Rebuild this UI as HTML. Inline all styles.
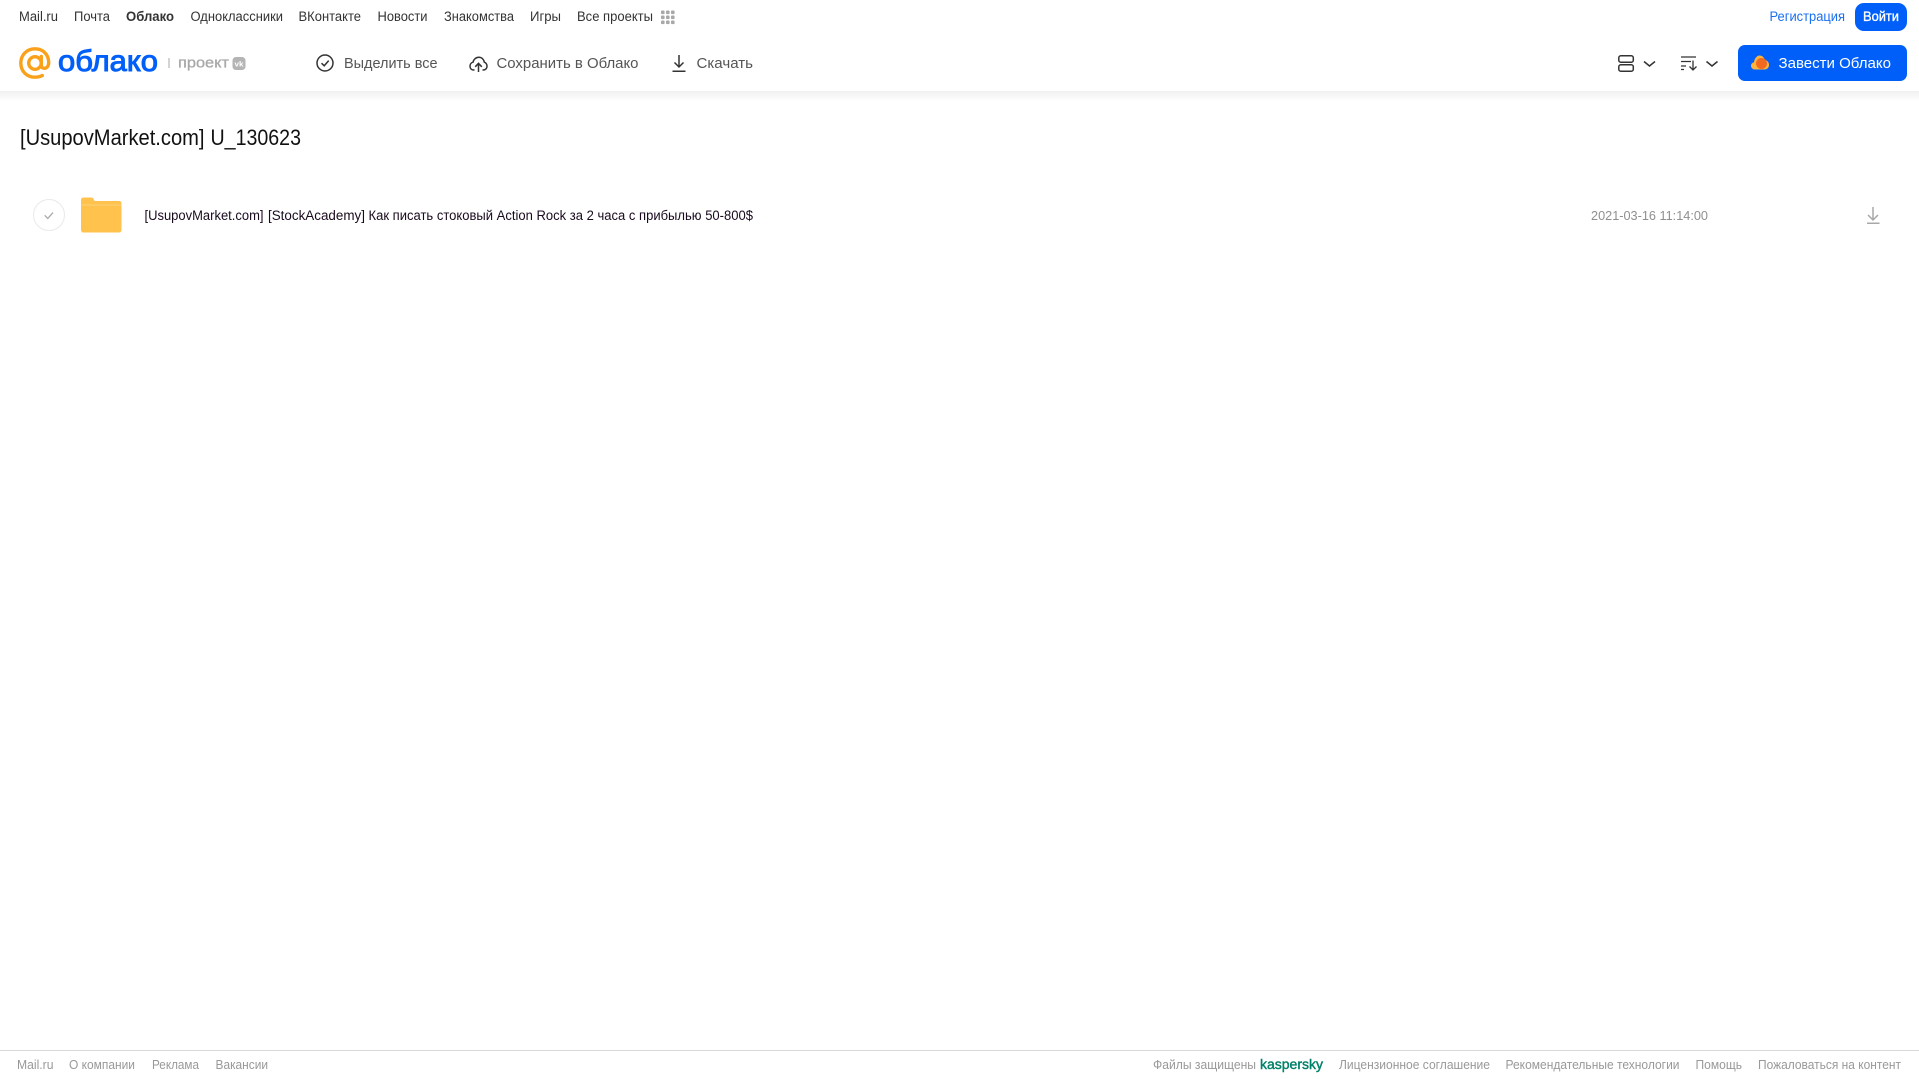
<!DOCTYPE html>
<html><head><meta charset="utf-8"><title>Облако</title>
<style>
html,body{margin:0;padding:0;background:#fff;overflow:hidden;width:1919px;height:1079px}
svg{display:block;position:absolute;left:0;top:0;filter:blur(.3px)}
text{font-family:"Liberation Sans",sans-serif;dominant-baseline:auto}
.n{font-size:13.5px;fill:#333}
.h{font-size:15px;fill:#555}
.f{font-size:12.5px;fill:#999}
</style></head><body>
<svg width="1919" height="1079" viewBox="0 0 1919 1079" xmlns="http://www.w3.org/2000/svg">
<defs><linearGradient id="sh" x1="0" y1="0" x2="0" y2="1"><stop offset="0" stop-color="#f0f0f0"/><stop offset="1" stop-color="#fff"/></linearGradient></defs>
<rect x="0" y="91" width="1919" height="10" fill="url(#sh)"/>

<!-- top nav -->
<g class="n">
<text class="n" x="19" y="21" textLength="39" lengthAdjust="spacingAndGlyphs">Mail.ru</text>
<text class="n" x="74" y="21" textLength="36" lengthAdjust="spacingAndGlyphs">Почта</text>
<text class="n" x="126" y="21" textLength="48" lengthAdjust="spacingAndGlyphs" font-weight="bold">Облако</text>
<text class="n" x="190.500" y="21" textLength="92.500" lengthAdjust="spacingAndGlyphs">Одноклассники</text>
<text class="n" x="298.500" y="21" textLength="62.500" lengthAdjust="spacingAndGlyphs">ВКонтакте</text>
<text class="n" x="377.500" y="21" textLength="50" lengthAdjust="spacingAndGlyphs">Новости</text>
<text class="n" x="444" y="21" textLength="70" lengthAdjust="spacingAndGlyphs">Знакомства</text>
<text class="n" x="530" y="21" textLength="31" lengthAdjust="spacingAndGlyphs">Игры</text>
<text class="n" x="577" y="21" textLength="76" lengthAdjust="spacingAndGlyphs">Все проекты</text>
</g>
<g fill="#a8a8a8">
<rect x="661" y="10.500" width="3.600" height="3.600" rx="1"/><rect x="666" y="10.500" width="3.600" height="3.600" rx="1"/><rect x="671" y="10.500" width="3.600" height="3.600" rx="1"/>
<rect x="661" y="15.500" width="3.600" height="3.600" rx="1"/><rect x="666" y="15.500" width="3.600" height="3.600" rx="1"/><rect x="671" y="15.500" width="3.600" height="3.600" rx="1"/>
<rect x="661" y="20.500" width="3.600" height="3.600" rx="1"/><rect x="666" y="20.500" width="3.600" height="3.600" rx="1"/><rect x="671" y="20.500" width="3.600" height="3.600" rx="1"/>
</g>
<text x="1769.500" y="21" font-size="13.500" fill="#1a6ff0" textLength="75.500" lengthAdjust="spacingAndGlyphs">Регистрация</text>
<rect x="1855" y="3" width="52" height="28" rx="9" fill="#005ff9"/>
<text x="1863" y="21" font-size="13.500" fill="#fff" stroke="#fff" stroke-width=".35" textLength="36" lengthAdjust="spacingAndGlyphs">Войти</text>

<!-- logo -->
<g fill="none" stroke="#f9a11b" stroke-width="3.400">
<circle cx="35" cy="63" r="6.300"/>
<path d="M41.300 56.500V65.500C41.300 69.500 48.700 69.800 48.700 62.500C48.700 54 42.500 48.800 35 48.800C26.800 48.800 20.800 55 20.800 63C20.800 71.500 27 77.200 35 77.200C37.800 77.200 40 76.700 42.300 75.500" stroke-linecap="round"/>
</g>
<text x="58" y="71" font-size="30" fill="#005ff9" stroke="#005ff9" stroke-width="1" textLength="100" lengthAdjust="spacingAndGlyphs">облако</text>
<rect x="168.500" y="58" width="1" height="10" fill="#aaa"/>
<text x="178" y="67.500" font-size="15" fill="#a8a8a8" stroke="#a8a8a8" stroke-width=".3" textLength="51" lengthAdjust="spacingAndGlyphs">проект</text>
<rect x="232.500" y="57" width="13" height="13" rx="3.500" fill="#b4b4b4"/>
<text x="234.500" y="66.500" font-size="7.500" font-weight="bold" fill="#fff" textLength="9" lengthAdjust="spacingAndGlyphs">vk</text>

<!-- toolbar -->
<circle cx="325" cy="63" r="8" fill="none" stroke="#333" stroke-width="1.500"/>
<path d="M321.500 63.200L324.200 65.800L328.700 60.600" fill="none" stroke="#333" stroke-width="1.500"/>
<text class="h" x="344" y="68" textLength="93.500" lengthAdjust="spacingAndGlyphs">Выделить все</text>
<path d="M474.500 70H473.800C471.300 70 470 68.200 470 66.200C470 64.200 471.300 62.600 473 62.200C473.500 59.400 476 57.200 478.800 57.200C481.600 57.200 483.700 59.200 484.300 62.200C486 62.800 487 64.200 487 66.200C487 68.200 485.600 70 483.300 70H482.500M478.500 72V63.500M475.200 66.800L478.500 63.300L481.800 66.800" fill="none" stroke="#333" stroke-width="1.500"/>
<text class="h" x="496.500" y="68" textLength="142" lengthAdjust="spacingAndGlyphs">Сохранить в Облако</text>
<path d="M679 55V67M674.500 62.500L679 67L683.500 62.500M672.500 71.300H685.500" fill="none" stroke="#333" stroke-width="1.500"/>
<text class="h" x="696.500" y="68" textLength="56.500" lengthAdjust="spacingAndGlyphs">Скачать</text>

<!-- right tools -->
<g fill="none" stroke="#333" stroke-width="1.500">
<rect x="1618.800" y="55.800" width="14.500" height="6.400" rx="2"/>
<rect x="1618.800" y="64.800" width="14.500" height="6.400" rx="2"/>
<path d="M1644 61.500L1649.500 66L1655 61.500"/>
<path d="M1681 57H1696M1681 61.500H1691M1681 66H1686M1681 69.500H1684" stroke-width="1.200"/>
<path d="M1693 60.500V69.500M1689.500 66.500L1693 70L1696.500 66.500" stroke-width="1.300"/>
<path d="M1706.500 61.500L1712 66L1717.500 61.500"/>
</g>
<rect x="1738" y="45" width="169" height="36" rx="7" fill="#005ff9"/>
<path d="M1755 69.500C1752.500 69.500 1751 67.800 1751 65.800C1751 64 1752.200 62.600 1754 62.200C1754.300 59.200 1756.600 55.500 1759.500 55.500C1762.300 55.500 1764 57.500 1764.800 59.800C1767.500 60.500 1769 62.600 1769 65C1769 67.600 1767 69.500 1764.500 69.500Z" fill="#fdb43b"/>
<circle cx="1761.500" cy="63.500" r="5.500" fill="#f26a1f"/>
<text x="1778.500" y="68" font-size="15" fill="#fff" textLength="112.500" lengthAdjust="spacingAndGlyphs">Завести Облако</text>

<!-- title -->
<text x="20" y="145" font-size="22" fill="#111" textLength="184.500" lengthAdjust="spacingAndGlyphs">[UsupovMarket.com]</text>
<text x="210.500" y="145" font-size="22" fill="#111" textLength="90.500" lengthAdjust="spacingAndGlyphs">U_130623</text>

<!-- row -->
<circle cx="49" cy="215" r="15.500" fill="#fff" stroke="#e9e9e9"/>
<path d="M44.700 215.300L47.800 218.400L53 212.600" fill="none" stroke="#a8a8a8" stroke-width="1.300"/>
<path d="M81 200C81 198.500 82 197.500 83.500 197.500H91C92.500 197.500 93.500 198.200 94.500 201H119C120.500 201 121.500 202 121.500 203.500V229.500C121.500 231.500 120.500 232.500 119 232.500H83.500C82 232.500 81 231.500 81 229.500Z" fill="#ffc34d"/>
<rect x="81" y="204.500" width="40.500" height="1" fill="#ffd27a"/>
<text x="144.500" y="220" font-size="13.500" fill="#1a0a1e" textLength="119" lengthAdjust="spacingAndGlyphs">[UsupovMarket.com]</text>
<text x="268" y="220" font-size="13.500" fill="#1a0a1e" textLength="97" lengthAdjust="spacingAndGlyphs">[StockAcademy]</text>
<text x="368.500" y="220" font-size="13.500" fill="#1a0a1e" textLength="384.500" lengthAdjust="spacingAndGlyphs">Как писать стоковый Action Rock за 2 часа с прибылью 50-800$</text>
<text x="1591" y="220" font-size="12.500" fill="#8f8f8f" textLength="117" lengthAdjust="spacingAndGlyphs">2021-03-16 11:14:00</text>
<path d="M1873 207V220M1868 215L1873 220L1878 215M1867 223.200H1879.500" fill="none" stroke="#a8a8a8" stroke-width="1.500"/>

<!-- footer -->
<rect x="0" y="1050" width="1919" height="1" fill="#d9d9d9"/>
<text class="f" x="17" y="1069" textLength="36.500" lengthAdjust="spacingAndGlyphs">Mail.ru</text>
<text class="f" x="69" y="1069" textLength="66" lengthAdjust="spacingAndGlyphs">О компании</text>
<text class="f" x="152" y="1069" textLength="47" lengthAdjust="spacingAndGlyphs">Реклама</text>
<text class="f" x="215.500" y="1069" textLength="52.500" lengthAdjust="spacingAndGlyphs">Вакансии</text>
<text class="f" x="1153" y="1069" textLength="103" lengthAdjust="spacingAndGlyphs">Файлы защищены</text>
<text x="1260" y="1069" font-size="13.500" fill="#00806a" stroke="#00806a" stroke-width=".4" textLength="63" lengthAdjust="spacingAndGlyphs">kaspersky</text>
<text class="f" x="1339" y="1069" textLength="151" lengthAdjust="spacingAndGlyphs">Лицензионное соглашение</text>
<text class="f" x="1505.500" y="1069" textLength="174" lengthAdjust="spacingAndGlyphs">Рекомендательные технологии</text>
<text class="f" x="1695.500" y="1069" textLength="46.500" lengthAdjust="spacingAndGlyphs">Помощь</text>
<text class="f" x="1758" y="1069" textLength="143" lengthAdjust="spacingAndGlyphs">Пожаловаться на контент</text>
</svg>
</body></html>
